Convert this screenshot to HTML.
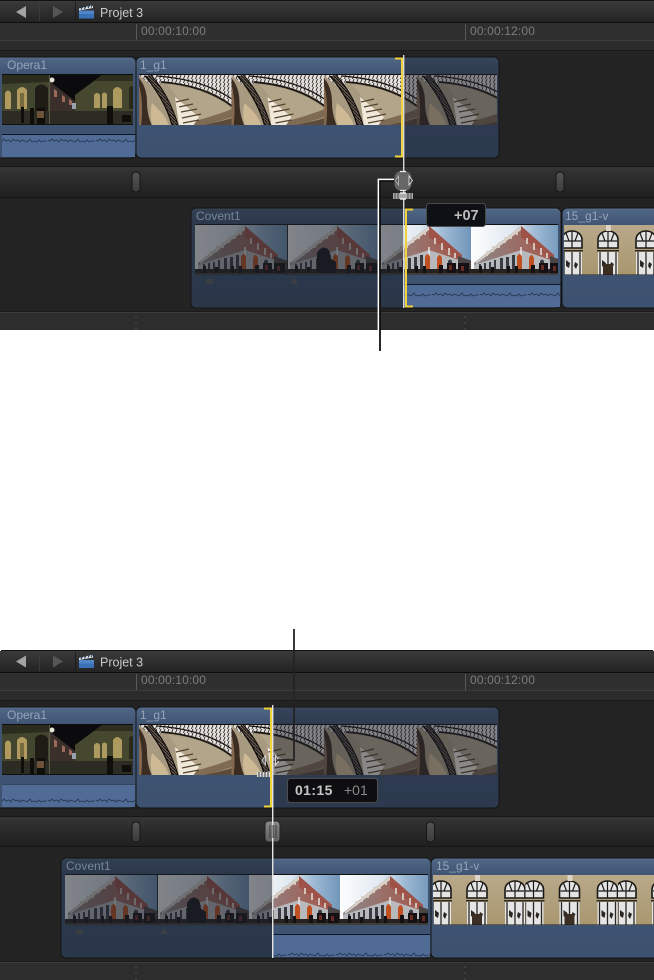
<!DOCTYPE html>
<html lang="fr"><head><meta charset="utf-8"><title>Projet 3</title>
<style>
html,body{margin:0;padding:0;background:#fff;width:654px;height:980px;overflow:hidden}
svg{display:block}
text{font-family:"Liberation Sans",sans-serif}
.tc{font-size:12px;letter-spacing:.15px;fill:#7c7c7c}
.ti{font-size:12px;fill:#94a4ba}
.pj{font-size:12.500px;fill:#c9c9c9}
</style></head><body>
<svg width="654" height="980" viewBox="0 0 654 980" xmlns="http://www.w3.org/2000/svg">
<defs>
<linearGradient id="tb" x1="0" y1="0" x2="0" y2="1"><stop offset="0" stop-color="#3a3a3a"/><stop offset=".5" stop-color="#2f2f2f"/><stop offset="1" stop-color="#232323"/></linearGradient>
<linearGradient id="band" x1="0" y1="0" x2="0" y2="1"><stop offset="0" stop-color="#353535"/><stop offset=".5" stop-color="#2a2a2a"/><stop offset="1" stop-color="#202020"/></linearGradient>
<linearGradient id="hd" x1="0" y1="0" x2="0" y2="1"><stop offset="0" stop-color="#5c7291"/><stop offset=".025" stop-color="#4e6483"/><stop offset=".17" stop-color="#405573"/><stop offset="1" stop-color="#3d5270"/></linearGradient>
<linearGradient id="pill" x1="0" y1="0" x2="0" y2="1"><stop offset="0" stop-color="#555"/><stop offset="1" stop-color="#3c3c3c"/></linearGradient>
<linearGradient id="hnd" x1="0" y1="0" x2="0" y2="1"><stop offset="0" stop-color="#8a8a8a"/><stop offset="1" stop-color="#5f5f5f"/></linearGradient>
<linearGradient id="sky" x1="0" y1="0" x2="1" y2="0"><stop offset="0" stop-color="#fdfdfd"/><stop offset=".45" stop-color="#dfe8f0"/><stop offset=".7" stop-color="#9db9d4"/><stop offset="1" stop-color="#6f94b8"/></linearGradient>
<linearGradient id="wall" x1="0" y1="0" x2="0" y2="1"><stop offset="0" stop-color="#b9a98a"/><stop offset="1" stop-color="#a8966f"/></linearGradient>
<linearGradient id="fac" x1="0" y1="0" x2="1" y2="0"><stop offset="0" stop-color="#8b8a8c"/><stop offset=".5" stop-color="#9a6f68"/><stop offset="1" stop-color="#a4574c"/></linearGradient>
<pattern id="wv" width="48" height="22" patternUnits="userSpaceOnUse"><path d="M0 8l2 1 2-2 2 2 3-1 2 2 2-3 3 2 2-1 2 2 2-2 3 1 2 1 3-3 2 3 2-1 3 1 2-2 2 2 3-1 3 0" fill="none" stroke="#25344e" stroke-width=".8"/></pattern>
<pattern id="hatch" width="4" height="4" patternUnits="userSpaceOnUse"><rect width="4" height="4" fill="#e2dfdd"/><path d="M0.500 4L2 0" stroke="#2a2420" stroke-width=".9"/></pattern>
<pattern id="hatch2" width="3" height="3" patternUnits="userSpaceOnUse"><rect width="3" height="3" fill="#6a5e54"/><path d="M0 0L3 3" stroke="#14100d" stroke-width="1"/></pattern>

<symbol id="opera" viewBox="0 0 133 51" width="133" height="51">
<rect width="133" height="51" fill="#0b0a0c"/>
<path d="M0 3L47 0V38H0Z" fill="#43462f"/>
<path d="M0 0H47V7L0 9Z" fill="#2b2b1e"/>
<path d="M73 20L100 0H133V38H73Z" fill="#45482f"/>
<path d="M100 0H133V6H92Z" fill="#2e2e20"/>
<path d="M47 6L73 26V38H47Z" fill="#3b2f2c"/>
<path d="M52 14l3 2v6h-3ZM60 20l3 2v5h-3ZM67 24l3 2v4h-3Z" fill="#9c6a5a"/>
<circle cx="50" cy="5" r="2.500" fill="#e6e6d6"/>
<path d="M3 34V18q3-5 6 0V34ZM15 34V15q5-6 10 0V34Z" fill="#b09a60"/>
<path d="M18 33V18h4V33Z" fill="#776a3f"/>
<path d="M33 36V13q6-7 13 0V36Z" fill="#1f1c15"/>
<path d="M92 33V20q3-4 6 0V33ZM100 33V19q2-3 5 0V33ZM111 33V15q4-6 9 0V33Z" fill="#ad9a5e"/>
<path d="M127 34V13q3-4 6 0V34Z" fill="#2b2719"/>
<rect y="36" width="133" height="15" fill="#2c2b24"/>
<path d="M19 32h3v16h-3ZM28 33h4v16h-4ZM35 33h8v16h-8ZM105 31h6v18h-6ZM120 40h9v7h-9Z" fill="#100e0b"/>
<path d="M35 36h7v7h-7Z" fill="#6e523a"/>
<rect x="47" y="0" width="1" height="51" fill="#5a5b46"/>
<rect x="70" y="28" width="4" height="6" fill="#97a4b0"/>
<rect y="49" width="133" height="2" fill="#11100d"/>
</symbol>

<symbol id="stair" viewBox="0 0 93 51" width="93" height="51">
<rect width="93" height="51" fill="#a89a80"/>
<path d="M0 0H93V30C78 17 52 8 24 8L14 12Z" fill="url(#hatch)"/>
<path d="M18 1C46 3 72 10 93 24" stroke="#1a1512" stroke-width="1.300" fill="none"/>
<path d="M22 7C50 9 74 17 93 31" stroke="#1a1512" stroke-width="1.800" fill="none"/>
<path d="M28 10C54 11 78 21 93 34V42C80 46 66 47 56 51H44C46 36 40 20 28 10Z" fill="#b3a58a"/>
<path d="M42 51C56 45 74 42 93 34V42C82 46 72 48 64 51Z" fill="#7f6a53"/>
<path d="M62 51C72 48 84 46 93 43V51Z" fill="#5c4a3a"/>
<path d="M36 22L60 42 54 51H40Z" fill="#f0e9da"/>
<path d="M37 27L50 24M40 32L54 29M42 37L58 34M43 43L62 39M44 48L60 45" stroke="#54422f" stroke-width="1.200"/>
<path d="M6 1L12 0C22 10 32 26 39 50L33 50C27 32 18 16 6 1Z" fill="url(#hatch2)"/>
<path d="M6 1C18 15 28 32 33 50" stroke="#0f0c0a" stroke-width="1.300" fill="none"/>
<path d="M12 0C22 11 32 27 39 50" stroke="#0f0c0a" stroke-width="1.100" fill="none"/>
<path d="M0 3C5 9 8 17 8 27 8 36 10 44 13 51H0Z" fill="#3b2d22"/>
<path d="M0 10C3 20 4 36 2 51H0Z" fill="#85694f"/>
<path d="M13 28C18 33 27 40 30 51H14C11 44 11 36 13 28Z" fill="#cdb994"/>
</symbol>

<symbol id="bld" viewBox="0 0 93 51" width="93" height="51">
<rect width="93" height="51" fill="url(#sky)"/>
<path d="M3 38L50 1 83 30V46H3Z" fill="url(#fac)"/>
<path d="M50 1L83 30V36L50 12Z" fill="#9f5348"/>
<path d="M50 1L5 37V39L50 5Z" fill="#d8d2ca"/>
<path d="M16 31V26M22 27V21M28 23V17M34 18V12M40 14V9M46 10V6M56 13V19M63 18V25M70 23V30M76 28V33" stroke="#d9cfc6" stroke-width="1.800"/>
<path d="M3 40L50 25 83 36V46H3Z" fill="#b8b9bd"/>
<path d="M50 22V46" stroke="#e6e6e6" stroke-width="1.500"/>
<path d="M8 39v6h2v-6ZM13 38v7h2v-7ZM18 37v8h2v-8ZM23 35v10h2V35ZM29 33v12h3V33ZM35 32v13h3V32ZM41 30v15h3V30Z" fill="#3a3b42"/>
<path d="M46 45V32q2.500-6 5 0V45ZM58 45V33q2.500-6 5 0V45Z" fill="#c0501f"/>
<path d="M69 45V36q2-3 4 0V45Z" fill="#3a3b42"/>
<path d="M79 31L93 36V46H79Z" fill="#4b4444"/>
<rect y="44" width="93" height="7" fill="#25221f"/>
<path d="M8 41h3v7H8ZM20 42h3v6h-3ZM36 41h3v7h-3ZM44 41h3v8h-3ZM60 40h4v9h-4ZM68 38h9v10h-9ZM79 38h11v11H79Z" fill="#131113"/>
<path d="M70 40h3v5h-3ZM82 41h3v5h-3Z" fill="#6c2a24"/>
<rect y="48.500" width="93" height="1" fill="#5e5b59"/>
</symbol>

<symbol id="win" viewBox="0 0 22 51" width="22" height="51">
<path d="M1 23V15C1 3 21 3 21 15V23Z" fill="#e4e4e4" stroke="#1a1815" stroke-width="1.600"/>
<path d="M11 6V23M2 16H20M5 8L8 16M17 8L14 16" stroke="#1a1815" stroke-width="1.200"/>
<rect x="1" y="27" width="20" height="24" fill="#e5e5e5"/>
<path d="M3 27V51M19 27V51M11 27V51" stroke="#2a2723" stroke-width="1.300"/>
<path d="M5 35l4 3-1 5-3-2ZM14 37l3 2-2 5-2-3Z" fill="#2a2723"/>
<rect x="0" y="25" width="22" height="1.500" fill="#2a2723"/>
</symbol>

<symbol id="wins" viewBox="0 0 93 51" width="93" height="51">
<rect width="93" height="51" fill="url(#wall)"/>
<use href="#win" x="-3" y="0"/>
<use href="#win" x="33" y="0"/>
<use href="#win" x="71" y="0"/>
<rect x="39" y="39" width="10" height="12" fill="#3c2e22"/>
<path d="M42 0h5v6h-5Z" fill="#ddd6c6"/>
<rect y="49.500" width="93" height="1.500" fill="#1b1815"/>
</symbol>

<g id="icon">
<path d="M0 5.500H15V13.500H0Z" fill="#4f86c8"/>
<path d="M0 9H15V13.500H0Z" fill="#3a70b6"/>
<path d="M0 3.500L14 0V3L0 5.500Z" fill="#e6ecf2"/>
<path d="M2 4.500l1.500-2.500M5.500 4l1.500-3M9 3l1.500-2.500M12 2.500l1.500-2.500" stroke="#1f3550" stroke-width="1.100"/>
</g>
</defs>

<rect width="654" height="980" fill="#fff"/>

<!-- ================= TOP PANEL ================= -->
<rect y="0" width="654" height="330" fill="#232323"/>
<rect y="0" width="654" height="1" fill="#111"/>
<rect y="1" width="654" height="21" fill="url(#tb)"/>
<rect y="22" width="654" height="1" fill="#0d0d0d"/>
<rect y="23" width="654" height="17" fill="#2f2f2f"/>
<rect y="40" width="654" height="1" fill="#3d3d3d"/>
<rect y="41" width="654" height="9" fill="#2b2b2b"/>
<rect y="50" width="654" height="1" fill="#1a1a1a"/>
<path d="M16 12L26 6V18Z" fill="#a3a3a3"/>
<path d="M63 12L53 6V18Z" fill="#565656"/>
<rect x="39" y="2" width="1" height="19" fill="#3b3b3b"/>
<rect x="75" y="2" width="1" height="19" fill="#1d1d1d"/>
<use href="#icon" x="79" y="5"/>
<text class="pj" x="100" y="17">Projet 3</text>
<rect x="136" y="24" width="1" height="16" fill="#595959"/>
<rect x="465" y="24" width="1" height="16" fill="#595959"/>
<text class="tc" x="141" y="35">00:00:10:00</text>
<text class="tc" x="470" y="35">00:00:12:00</text>

<!-- Opera1 -->
<rect x="-6" y="57" width="142" height="101" rx="5" fill="url(#hd)" stroke="#141414"/>
<rect x="2" y="74" width="131" height="51" fill="#0d0d0d"/>
<svg x="2" y="75" width="131" height="50"><use href="#opera"/></svg>
<rect x="2" y="134" width="134" height="1.200" fill="#0e1420"/>
<rect x="2" y="135" width="133" height="22" fill="#4f6b96"/>
<rect x="2" y="135" width="133" height="22" fill="url(#wv)"/>
<text class="ti" x="7" y="69">Opera1</text>

<!-- 1_g1 -->
<rect x="136" y="57" width="363" height="101" rx="5" fill="url(#hd)" stroke="#141414"/>
<rect x="139" y="74" width="358" height="51" fill="#0f0f0f"/>
<svg x="139" y="75" width="358" height="50">
<use href="#stair" x="0"/><use href="#stair" x="92.500"/><use href="#stair" x="185"/><use href="#stair" x="278"/>
</svg>
<text class="ti" x="140" y="69">1_g1</text>
<path d="M404 57.500H494a4.500 4.500 0 0 1 4.500 4.500V153a4.500 4.500 0 0 1-4.500 4.500H404Z" fill="#1c2029" fill-opacity=".48"/>
<path d="M395 58.500H402V156.500H395" fill="none" stroke="#f0d23a" stroke-width="2"/>

<!-- Storyline band -->
<rect y="166" width="654" height="1" fill="#161616"/>
<rect y="167" width="654" height="30" fill="url(#band)"/>
<rect y="197" width="654" height="1" fill="#161616"/>
<rect x="132" y="172" width="8" height="20" rx="3.500" fill="url(#pill)" stroke="#151515"/>
<rect x="556" y="172" width="8" height="20" rx="3.500" fill="url(#pill)" stroke="#151515"/>

<!-- Covent1 -->
<rect x="191" y="208" width="370" height="100" rx="5" fill="url(#hd)" stroke="#141414"/>
<rect x="195" y="224" width="363" height="51" fill="#0f0f0f"/>
<svg x="195" y="225" width="363" height="50">
<use href="#bld" x="0"/><use href="#bld" x="92"/><use href="#bld" x="184"/><use href="#bld" x="276"/>
<rect x="92" width="1" height="50" fill="#222"/>
<path d="M122 48V28q4-7 9-5 5 2 4 10l6 4v11Z" fill="#15151a"/>
</svg>
<rect x="404" y="284" width="157" height="1.200" fill="#101624"/>
<rect x="404" y="285" width="156" height="22" fill="#4f6b96"/>
<rect x="404" y="285" width="156" height="22" fill="url(#wv)"/>
<path d="M205 284l2-5h5l2 5ZM290 284l4-6 5 6Z" fill="#6d6c60" opacity=".7"/>
<path d="M404 208.500H196a4.500 4.500 0 0 0-4.500 4.500V303a4.500 4.500 0 0 0 4.500 4.500H404Z" fill="#1c2029" fill-opacity=".55"/>
<text class="ti" x="196" y="220" fill-opacity=".7">Covent1</text>
<path d="M413 209.500H406V306.500H413" fill="none" stroke="#f0d23a" stroke-width="2"/>

<!-- 15_g1-v -->
<rect x="562" y="208" width="100" height="100" rx="5" fill="url(#hd)" stroke="#141414"/>
<svg x="564" y="225" width="90" height="50"><use href="#wins"/></svg>
<text class="ti" x="565" y="220">15_g1-v</text>

<!-- Bottom ruler -->
<rect y="311" width="654" height="1" fill="#1a1a1a"/>
<rect y="312" width="654" height="18" fill="#2d2d2d"/>
<rect y="312" width="654" height="1" fill="#3c3c3c"/>
<path d="M136 316v2M136 322v2M136 328v2M465 316v2M465 322v2M465 328v2" stroke="#4e4e4e"/>

<!-- Tooltip +07 -->
<rect x="426.500" y="203.500" width="59" height="23" rx="3" fill="#0f1016" stroke="#4a4a4a"/>
<text x="454" y="220" font-size="14.500" font-weight="bold" fill="#bdbdbd">+07</text>

<!-- Cursor top -->
<rect x="403" y="55" width="1.400" height="253" fill="#d8d8d8"/>
<rect x="394.500" y="171" width="17" height="20" rx="7" fill="#666"/>
<path d="M400 171.500h6M400 190.500h6" stroke="#eee" stroke-width="1.200" fill="none"/>
<path d="M398.500 176V185L395.500 180.500Z" fill="#555" stroke="#bbb" stroke-width=".8"/>
<path d="M409 176V185L412.500 180.500Z" fill="#444" stroke="#eee" stroke-width=".8"/>
<rect x="393" y="193" width="20" height="6" fill="#aaa"/>
<path d="M395 193v6M398 193v6M408 193v6M411 193v6" stroke="#444"/>
<path d="M400 193h6M400 199h6" stroke="#fff" stroke-width="1.200" fill="none"/>

<!-- Leader top -->
<path d="M379 330V180H394" fill="none" stroke="#fff" stroke-width="2.800"/>
<path d="M380 351V181H394" fill="none" stroke="#111" stroke-width="1.800"/>

<!-- ================= BOTTOM PANEL ================= -->
<path d="M0 980V653a3 3 0 0 1 3-3H651a3 3 0 0 1 3 3V980Z" fill="#232323"/>
<rect x="1" y="650" width="652" height="1" fill="#111"/>
<rect y="651" width="654" height="21" fill="url(#tb)"/>
<rect y="672" width="654" height="1" fill="#0d0d0d"/>
<rect y="673" width="654" height="17" fill="#2f2f2f"/>
<rect y="690" width="654" height="1" fill="#3d3d3d"/>
<rect y="691" width="654" height="9" fill="#2b2b2b"/>
<rect y="700" width="654" height="1" fill="#1a1a1a"/>
<path d="M16 661.500L26 655.500V667.500Z" fill="#a3a3a3"/>
<path d="M63 661.500L53 655.500V667.500Z" fill="#565656"/>
<rect x="39" y="652" width="1" height="19" fill="#3b3b3b"/>
<rect x="75" y="652" width="1" height="19" fill="#1d1d1d"/>
<use href="#icon" x="79" y="654.500"/>
<text class="pj" x="100" y="666.500">Projet 3</text>
<rect x="136" y="674" width="1" height="16" fill="#595959"/>
<rect x="465" y="674" width="1" height="16" fill="#595959"/>
<text class="tc" x="141" y="684">00:00:10:00</text>
<text class="tc" x="470" y="684">00:00:12:00</text>

<!-- Opera1 -->
<rect x="-6" y="707" width="142" height="101" rx="5" fill="url(#hd)" stroke="#141414"/>
<rect x="2" y="724" width="131" height="51" fill="#0d0d0d"/>
<svg x="2" y="725" width="131" height="50"><use href="#opera"/></svg>
<rect x="2" y="785" width="133" height="22" fill="#4f6b96"/>
<rect x="2" y="785" width="133" height="22" fill="url(#wv)"/>
<rect x="2" y="784" width="134" height="1" fill="#33445f"/>
<text class="ti" x="7" y="719">Opera1</text>

<!-- 1_g1 -->
<rect x="136" y="707" width="363" height="101" rx="5" fill="url(#hd)" stroke="#141414"/>
<rect x="139" y="724" width="358" height="51" fill="#0f0f0f"/>
<svg x="139" y="725" width="358" height="50">
<use href="#stair" x="0"/><use href="#stair" x="92.500"/><use href="#stair" x="185"/><use href="#stair" x="278"/>
</svg>
<text class="ti" x="140" y="719">1_g1</text>
<path d="M273 707.500H494a4.500 4.500 0 0 1 4.500 4.500V803a4.500 4.500 0 0 1-4.500 4.500H273Z" fill="#1c2029" fill-opacity=".48"/>
<path d="M264 708.500H271V806.500H264" fill="none" stroke="#f0d23a" stroke-width="2"/>

<!-- Tooltip 01:15 -->
<rect x="287.500" y="778.500" width="90" height="24" rx="3" fill="#0e0e10" stroke="#4d4d4d"/>
<text x="295" y="795" font-size="14" font-weight="bold" letter-spacing=".4" fill="#c6c6c6">01:15</text>
<text x="344" y="795" font-size="14" fill="#8a8a8a">+01</text>

<!-- Storyline band -->
<rect y="816" width="654" height="1" fill="#161616"/>
<rect y="817" width="654" height="29" fill="url(#band)"/>
<rect y="846" width="654" height="1" fill="#161616"/>
<rect x="132" y="822" width="8" height="20" rx="3.500" fill="url(#pill)" stroke="#151515"/>
<rect x="426.500" y="822" width="8" height="20" rx="3.500" fill="url(#pill)" stroke="#151515"/>
<rect x="265" y="821" width="15" height="21" rx="3.500" fill="url(#hnd)" stroke="#222"/>

<!-- Covent1 -->
<rect x="61" y="858" width="370" height="100" rx="5" fill="url(#hd)" stroke="#141414"/>
<rect x="65" y="874" width="363" height="51" fill="#0f0f0f"/>
<svg x="65" y="875" width="363" height="50">
<use href="#bld" x="0"/><use href="#bld" x="92"/><use href="#bld" x="184"/><use href="#bld" x="275"/>
<rect x="92" width="1" height="50" fill="#222"/>
<path d="M122 48V28q4-7 9-5 5 2 4 10l6 4v11Z" fill="#15151a"/>
</svg>
<rect x="273" y="934" width="157" height="1.200" fill="#101624"/>
<rect x="273" y="935" width="157" height="22" fill="#4f6b96"/>
<rect x="273" y="935" width="157" height="22" fill="url(#wv)"/>
<path d="M75 934l2-5h5l2 5ZM160 934l4-6 5 6Z" fill="#6d6c60" opacity=".7"/>
<path d="M272 858.500H66a4.500 4.500 0 0 0-4.500 4.500V953a4.500 4.500 0 0 0 4.500 4.500H272Z" fill="#1c2029" fill-opacity=".55"/>
<text class="ti" x="66" y="870" fill-opacity=".7">Covent1</text>

<!-- 15_g1-v -->
<rect x="431" y="858" width="240" height="100" rx="5" fill="url(#hd)" stroke="#141414"/>
<svg x="433" y="875" width="221" height="50"><use href="#wins" x="0"/><use href="#wins" x="92.500"/><use href="#wins" x="185"/></svg>
<text class="ti" x="436" y="870">15_g1-v</text>

<!-- Bottom ruler -->
<rect y="961" width="654" height="1" fill="#1a1a1a"/>
<rect y="962" width="654" height="18" fill="#2d2d2d"/>
<rect y="962" width="654" height="1" fill="#3c3c3c"/>
<path d="M136 966v2M136 972v2M136 978v2M465 966v2M465 972v2M465 978v2" stroke="#4e4e4e"/>

<!-- White playhead bottom -->
<rect x="272" y="705" width="1.400" height="253" fill="#e4e4e4"/>
<path d="M270 825v13M273 825v13M276 825v13" stroke="#3a3a3a" stroke-width="1"/>

<!-- Cursor bottom -->
<path d="M265.500 755.500V765L262 760.500Z" fill="#666" stroke="#ddd" stroke-width=".8"/>
<path d="M275.500 755.500V765L279 760.500Z" fill="#444" stroke="#eee" stroke-width=".8"/>
<path d="M268 750h2M268 772h2" stroke="#fff"/>
<rect x="257" y="772" width="13" height="5" fill="#ddd"/>
<path d="M259 772v5M262 772v5M265 772v5M268 772v5" stroke="#333"/>

<!-- Leader bottom -->
<path d="M294 629V760H278" fill="none" stroke="#232326" stroke-width="1.800"/>
</svg>
</body></html>
